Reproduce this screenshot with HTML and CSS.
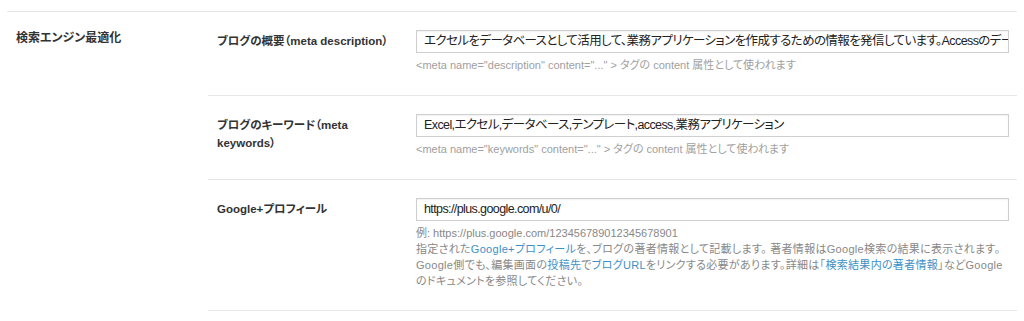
FILE: index.html
```html
<!DOCTYPE html>
<html lang="ja">
<head>
<meta charset="utf-8">
<title>検索エンジン最適化</title>
<link rel="stylesheet" href="styles.css">
</head>
<body>
<div class="section">
  <div class="section-title">検索エンジン最適化</div>
  <div class="rows">
    <div class="row">
      <div class="label nowrap">ブログの概要（meta description）</div>
      <div class="field">
        <div class="text-input"><span>エクセルをデータベースとして活用して、業務アプリケーションを作成するための情報を発信しています。Accessのデータベースを使わずにエクセルで業務アプリケーションを作ります。</span></div>
        <p class="hint">&lt;meta name="description" content="..." &gt; タグの content 属性として使われます</p>
      </div>
    </div>
    <div class="row">
      <div class="label">ブログのキーワード（meta<br>keywords）</div>
      <div class="field">
        <div class="text-input"><span>Excel,エクセル,データベース,テンプレート,access,業務アプリケーション</span></div>
        <p class="hint">&lt;meta name="keywords" content="..." &gt; タグの content 属性として使われます</p>
      </div>
    </div>
    <div class="row row-last">
      <div class="label nowrap">Google+プロフィール</div>
      <div class="field">
        <div class="text-input"><span>https://plus.google.com/u/0/</span></div>
        <p class="help">例: https://plus.google.com/123456789012345678901<br><span class="wide">指定された<a class="link" href="#">Google+プロフィール</a>を、ブログの著者情報として記載します。 著者情報はGoogle検索の結果に表示されます。<br>Google側でも、編集画面の<a class="link" href="#">投稿先</a>で<a class="link" href="#">ブログURL</a>をリンクする必要があります。詳細は「<a class="link" href="#">検索結果内の著者情報</a>」などGoogle<br>のドキュメントを参照してください。</span></p>
      </div>
    </div>
  </div>
</div>
</body>
</html>
```
FILE: styles.css
```css
html, body {
  margin: 0;
  padding: 0;
  background: #ffffff;
}
body {
  font-family: "Liberation Sans", "Noto Sans CJK JP", sans-serif;
  font-feature-settings: "palt";
  color: #333333;
  font-size: 12px;
}
.section {
  margin: 11px 7px 0 7px;
  border-top: 1px solid #e6e6e6;
  display: flex;
}
.section-title {
  width: 201px;
  flex: none;
  box-sizing: border-box;
  padding: 17px 0 0 9px;
  font-size: 12px;
  line-height: 18px;
  font-weight: bold;
  color: #333333;
}
.rows {
  flex: 1;
}
.row {
  display: flex;
  border-bottom: 1px solid #e6e6e6;
  padding: 18px 0 22px 0;
}
.row-last {
  padding-bottom: 21px;
}
.label {
  width: 208px;
  flex: none;
  box-sizing: border-box;
  padding: 2px 20px 0 9px;
  font-size: 11.5px;
  line-height: 18px;
  font-weight: bold;
  color: #333333;
}
.nowrap {
  white-space: nowrap;
}
.field {
  width: 593px;
  flex: none;
}
.text-input {
  height: 23px;
  box-sizing: border-box;
  border: 1px solid #cfcfcf;
  box-shadow: inset 0 1px 2px rgba(0, 0, 0, 0.06);
  padding: 0 7px;
  font-size: 12.5px;
  letter-spacing: -0.6px;
  line-height: 21px;
  color: #222222;
  white-space: nowrap;
  overflow: hidden;
}
.hint {
  margin: 4px 0 0 0;
  font-size: 11px;
  line-height: 16px;
  color: #a0a0a0;
  white-space: nowrap;
}
.help {
  margin: 4px 0 0 0;
  font-size: 11px;
  line-height: 16px;
  color: #888888;
  white-space: nowrap;
}
.wide {
  letter-spacing: 0.3px;
}
.link {
  color: #3d8fc6;
  text-decoration: none;
}
```
